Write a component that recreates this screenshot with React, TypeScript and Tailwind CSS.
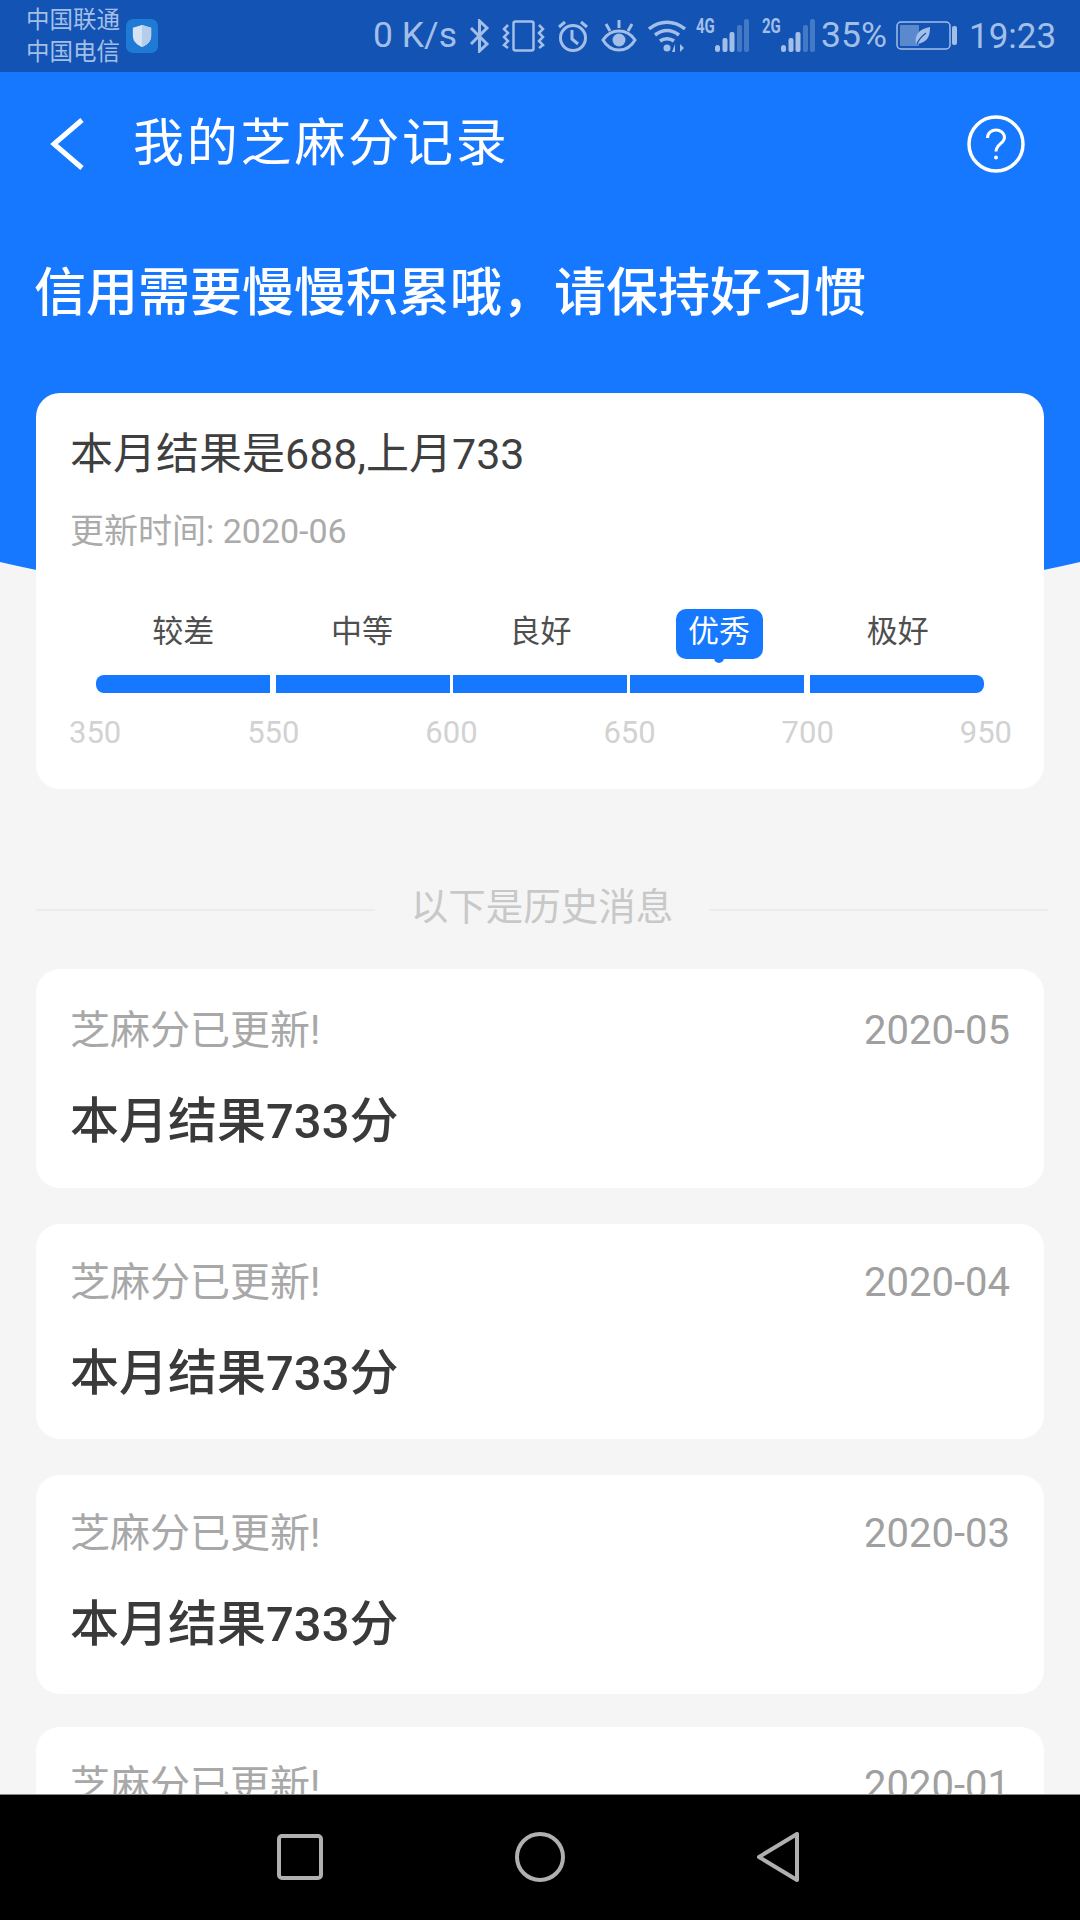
const font = 'font-["Roboto","Noto_Sans_CJK_SC",sans-serif]';

const levels = [
  { label: '较差' },
  { label: '中等' },
  { label: '良好' },
  { label: '优秀', active: true },
  { label: '极好' },
];

const ticks = ['350', '550', '600', '650', '700', '950'];

const history = [
  { date: '2020-05', box: 'h-[219px] pt-[37px]' },
  { date: '2020-04', box: 'mt-[36px] h-[215px] pt-[34px]' },
  { date: '2020-03', box: 'mt-[36px] h-[219px] pt-[34px]' },
  { date: '2020-01', box: 'mt-[33px] h-[219px] pt-[34px]' },
];

function SignalIcon({ label }: { label: string }) {
  return (
    <div className="relative h-[36px] w-[53px] shrink-0">
      <span className="absolute left-0 top-[-2px] origin-left scale-x-75 text-[20px] font-bold leading-[20px]">{label}</span>
      <svg viewBox="0 0 53 36" className="h-[36px] w-[53px]" fill="currentColor">
        <rect x="19" y="27" width="5" height="7" rx="2.5" />
        <rect x="26.5" y="20" width="5" height="14" rx="2" />
        <rect x="33.5" y="14" width="5" height="20" rx="2" />
        <rect x="41" y="7" width="5" height="27" rx="2" opacity="0.35" />
        <rect x="48" y="1" width="5" height="33" rx="2" opacity="0.35" />
      </svg>
    </div>
  );
}

function StatusBar() {
  return (
    <div className="flex h-[72px] shrink-0 items-center bg-[#1253b3] pl-[26px] text-[#a3bfe8]">
      <div className="w-[94px] text-[23.5px] leading-[32px]">
        <div>中国联通</div>
        <div>中国电信</div>
      </div>
      <div className="ml-[6px] flex h-[34px] w-[32px] items-center justify-center rounded-[7px] bg-[#1f7ad6]">
        <svg viewBox="0 0 24 26" className="h-[24px] w-[22px]">
          <path d="M12 1l10 3v9c0 6-5 10-10 12C7 23 2 19 2 13V4z" fill="#d5e3f5" />
          <path d="M12 1l10 3v9c0 6-5 10-10 12z" fill="#b5cdea" />
        </svg>
      </div>
      <span className="ml-[215px] w-[83px] whitespace-nowrap text-[35.5px] leading-none">0 K/s</span>
      <svg viewBox="0 0 21 34" className="ml-[13px] h-[34px] w-[21px]" fill="none" stroke="currentColor" strokeWidth="3">
        <path d="M2 9l16 16-7.5 7V2L18 9 2 25" />
      </svg>
      <svg viewBox="0 0 43 32" className="ml-[12px] h-[32px] w-[43px]" fill="none" stroke="currentColor" strokeWidth="2.5">
        <rect x="11.5" y="1.5" width="20" height="29" rx="2" />
        <path d="M6 5L2 9l4 4-4 4 4 4-4 4 4 3M37 5l4 4-4 4 4 4-4 4 4 4-4 3" />
      </svg>
      <svg viewBox="0 0 32 32" className="ml-[12px] h-[32px] w-[32px]" fill="none" stroke="currentColor" strokeWidth="3">
        <circle cx="16" cy="18" r="12.5" />
        <path d="M15 10v9l6 5M2 7l6-5M30 7l-6-5" />
      </svg>
      <svg viewBox="0 0 36 32" className="ml-[12px] h-[32px] w-[36px]" fill="none" stroke="currentColor" strokeWidth="3">
        <path d="M2 20c4-6 9-9 16-9s12 3 16 9c-4 7-9 10-16 10S6 27 2 20z" />
        <circle cx="18" cy="20" r="6.5" fill="currentColor" stroke="none" />
        <path d="M18 0v8M5 4l4 7M31 4l-4 7" />
      </svg>
      <svg viewBox="0 0 38 32" className="ml-[11px] h-[32px] w-[38px]" fill="none" stroke="currentColor" strokeWidth="3.5">
        <path d="M1 9c11-9 25-9 36 0M7 15c8-6 16-6 24 0M12 21c4-3 10-3 14 0" />
        <circle cx="19" cy="28" r="3.5" fill="currentColor" stroke="none" />
        <path d="M27 32v-8l-3 8zM32 24v8l4-4z" fill="currentColor" stroke="none" />
      </svg>
      <div className="ml-[10px]">
        <SignalIcon label="4G" />
      </div>
      <div className="ml-[13px]">
        <SignalIcon label="2G" />
      </div>
      <span className="ml-[6px] w-[64px] whitespace-nowrap text-[35.5px] leading-none">35%</span>
      <svg viewBox="0 0 61 30" className="ml-[11px] h-[30px] w-[61px]" fill="none">
        <rect x="1" y="1" width="53" height="27" rx="4" stroke="currentColor" strokeWidth="1.5" />
        <rect x="4" y="4" width="19" height="21" rx="1" fill="currentColor" opacity="0.5" />
        <path d="M20 23c-1-4 0-9 3-12 3-3 7-4 11-5 0 6-1 11-5 14-3 2-6 3-9 3z" fill="currentColor" />
        <path d="M21 23c2-5 5-8 9-11" stroke="#1253b3" strokeWidth="1.2" />
        <rect x="56" y="5" width="5" height="19" rx="2" fill="currentColor" />
      </svg>
      <span className="ml-[12px] whitespace-nowrap text-[35px] leading-none">19:23</span>
    </div>
  );
}

function NavBar() {
  return (
    <div className="flex h-[126px] shrink-0 items-start border-t border-[#8a8a8a] bg-black pl-[277px] pt-[37px]">
      <svg viewBox="0 0 46 46" className="mt-[2px] h-[46px] w-[46px]" fill="none" stroke="#b0b0b0" strokeWidth="4">
        <rect x="2" y="2" width="42" height="42" rx="3" />
      </svg>
      <svg viewBox="0 0 50 50" className="ml-[192px] h-[50px] w-[50px]" fill="none" stroke="#b0b0b0" strokeWidth="4">
        <circle cx="25" cy="25" r="23" />
      </svg>
      <svg viewBox="0 0 44 50" className="ml-[191px] h-[50px] w-[44px]" fill="none" stroke="#b0b0b0" strokeWidth="4" strokeLinejoin="round">
        <path d="M41 2v46L3 25z" />
      </svg>
    </div>
  );
}

function ScoreCard() {
  return (
    <div className="mx-[36px] mt-[69px] rounded-[24px] bg-white px-[34px] pb-[36px] pt-[36px]">
      <div className="text-[43px] leading-[50px] text-[#3f3f3f]">本月结果是688,上月733</div>
      <div className="mt-[32px] text-[34px] leading-[40px] text-[#ababab]">更新时间: 2020-06</div>
      <div className="ml-[24px] mt-[58px] grid w-[893px] grid-cols-5">
        {levels.map((level) => (
          <div key={level.label} className="flex h-[50px] justify-center">
            <span
              className={
                level.active
                  ? 'relative h-[50px] w-[87px] rounded-[10px] bg-[#1677ff] text-center text-[31px] leading-[46px] text-white'
                  : 'text-[31px] leading-[46px] text-[#4f4f4f]'
              }
            >
              {level.label}
              {level.active && <span className="absolute bottom-[-4px] left-[38px] h-[8px] w-[10px] rounded-b-full bg-[#1677ff]" />}
            </span>
          </div>
        ))}
      </div>
      <div className="ml-[26px] mt-[16px] flex h-[18px] w-[889px]">
        <div className="h-full w-[174px] rounded-l-[8px] bg-[#1677ff]" />
        <div className="ml-[6px] h-full w-[174px] bg-[#1677ff]" />
        <div className="ml-[3px] h-full w-[174px] bg-[#1677ff]" />
        <div className="ml-[3px] h-full w-[174px] bg-[#1677ff]" />
        <div className="ml-[6px] h-full w-[174px] rounded-r-[8px] bg-[#1677ff]" />
      </div>
      <div className="-ml-[1px] mt-[20px] flex w-[943px] justify-between text-[31px] leading-[40px] text-[#d2d2d2]">
        {ticks.map((tick) => (
          <span key={tick}>{tick}</span>
        ))}
      </div>
    </div>
  );
}

function HistoryCard({ date, box }: { date: string; box: string }) {
  return (
    <div className={`${box} shrink-0 rounded-[24px] bg-white px-[34px]`}>
      <div className="flex items-center justify-between">
        <span className="text-[40px] leading-[50px] text-[#a8a8a8]">芝麻分已更新!</span>
        <span className="text-[40px] leading-[50px] text-[#a0a0a0]">{date}</span>
      </div>
      <div className="mt-[36px] text-[49px] font-medium leading-[60px] text-[#3a3a3a]">本月结果733分</div>
    </div>
  );
}

export default function App() {
  return (
    <div className={`flex h-[1920px] w-[1080px] flex-col overflow-hidden bg-[#f5f5f5] ${font}`}>
      <StatusBar />
      <div className="relative flex-1 overflow-hidden">
        <div className="absolute left-[-360px] top-0 h-[546px] w-[1800px] rounded-b-[900px_280px] bg-[#1677ff]" />
        <div className="relative">
          <div className="flex h-[144px] items-center pl-[50px] pr-[55px] text-white">
            <svg viewBox="0 0 34 52" className="h-[52px] w-[34px]" fill="none" stroke="currentColor" strokeWidth="5">
              <path d="M32 2L4 26l28 24" />
            </svg>
            <h1 className="ml-[49px] flex-1 text-[51px] font-normal leading-[60px] tracking-[2.8px]">我的芝麻分记录</h1>
            <svg viewBox="0 0 58 58" className="h-[58px] w-[58px]" fill="none" stroke="currentColor" strokeWidth="3.5">
              <circle cx="29" cy="29" r="27" />
              <path d="M20.5 23c0-5 4-8 8.5-8s8.5 3 8.5 7.5c0 6-8.5 6.5-8.5 14" strokeWidth="3" />
              <circle cx="29" cy="42.5" r="2" fill="currentColor" stroke="none" />
            </svg>
          </div>
          <h2 className="ml-[34px] mt-[48px] text-[52px] font-medium leading-[60px] text-white">信用需要慢慢积累哦，请保持好习惯</h2>
          <ScoreCard />
          <div className="mt-[93px] flex items-center pl-[36px] pr-[32px]">
            <div className="mt-[6px] h-[2px] flex-1 bg-[#ececec]" />
            <span className="mx-[36px] text-[37.5px] leading-[50px] text-[#c8c8c8]">以下是历史消息</span>
            <div className="mt-[6px] h-[2px] flex-1 bg-[#ececec]" />
          </div>
          <div className="mx-[36px] mt-[37px] flex flex-col">
            {history.map((item) => (
              <HistoryCard key={item.date} date={item.date} box={item.box} />
            ))}
          </div>
        </div>
      </div>
      <NavBar />
    </div>
  );
}
